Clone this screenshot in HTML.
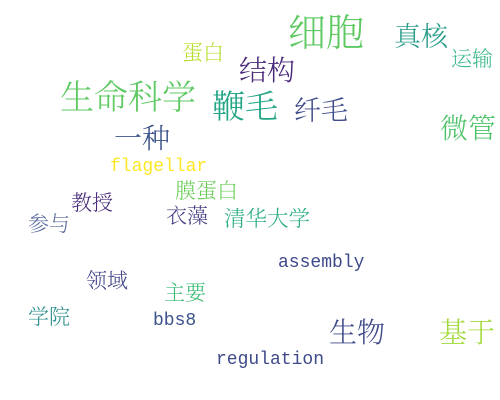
<!DOCTYPE html>
<html><head><meta charset="utf-8"><style>
html,body{margin:0;padding:0;background:#fff;width:500px;height:400px;overflow:hidden;position:relative}
span{position:absolute;white-space:nowrap;line-height:1;font-family:"Liberation Serif","Noto Serif CJK SC",serif;font-weight:300}
.m{font-family:"Liberation Mono",monospace;font-weight:normal}
</style></head><body>
<span style="left:288px;top:15px;font-size:38px;color:#5ec962">细胞</span>
<span style="left:394px;top:24px;font-size:27px;color:#2a9c8a">真核</span>
<span style="left:182px;top:43px;font-size:21px;color:#b5de2b">蛋白</span>
<span style="left:451px;top:49px;font-size:21px;color:#3db98a">运输</span>
<span style="left:239px;top:58px;font-size:28px;color:#482878">结构</span>
<span style="left:60px;top:82px;font-size:34px;color:#5ec962">生命科学</span>
<span style="left:212px;top:92px;font-size:33px;color:#21a585">鞭毛</span>
<span style="left:294px;top:98px;font-size:27px;color:#3e4a89">纤毛</span>
<span style="left:440px;top:116px;font-size:28px;color:#4ec36b">微管</span>
<span style="left:114px;top:126px;font-size:28px;color:#3b528b">一种</span>
<span class="m" style="left:110px;top:158px;font-size:18px;color:#fde725">flagellar</span>
<span style="left:175px;top:181px;font-size:21px;color:#6ccd5a">膜蛋白</span>
<span style="left:71px;top:193px;font-size:21px;color:#472d7b">教授</span>
<span style="left:28px;top:214px;font-size:21px;color:#5a6a9a">参与</span>
<span style="left:166px;top:206px;font-size:21px;color:#433e85">衣藻</span>
<span style="left:224px;top:209px;font-size:21.5px;color:#27ad81">清华大学</span>
<span class="m" style="left:278px;top:254px;font-size:18px;color:#3e4a89">assembly</span>
<span style="left:86px;top:271px;font-size:21px;color:#414487">领域</span>
<span style="left:164px;top:283px;font-size:21px;color:#3bbb75">主要</span>
<span style="left:28px;top:307px;font-size:21px;color:#2c8e8c">学院</span>
<span class="m" style="left:153px;top:312px;font-size:18px;color:#3b528b">bbs8</span>
<span style="left:329px;top:320px;font-size:28px;color:#3e4a89">生物</span>
<span style="left:439px;top:320px;font-size:28px;color:#a0da39">基于</span>
<span class="m" style="left:216px;top:351px;font-size:18px;color:#3e4a89">regulation</span>
</body></html>
